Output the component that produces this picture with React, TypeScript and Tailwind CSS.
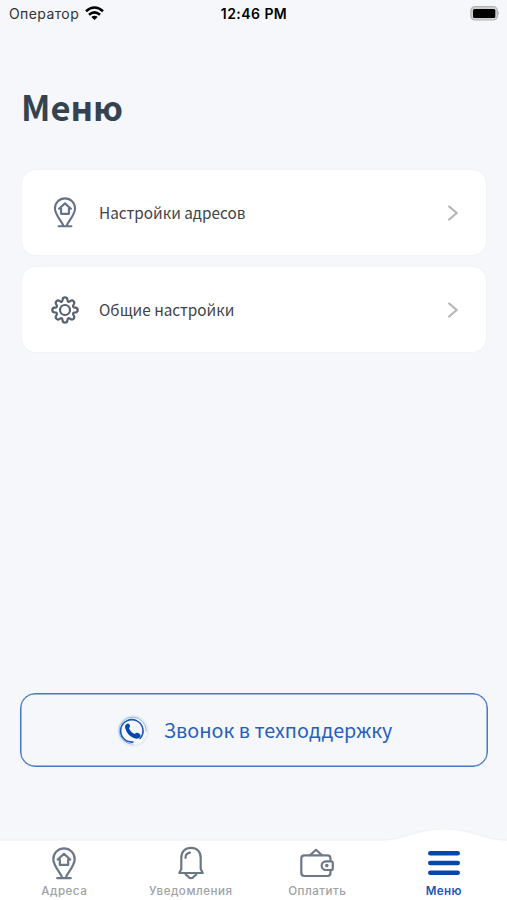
import React from "react";

const sourceFont = "font-['Noto_Sans_CJK_SC','Noto_Sans',sans-serif]";
const systemFont = "font-[Inter,'Liberation_Sans',sans-serif]";

type IconProps = { className?: string };

function AddressIcon({ className }: IconProps) {
  return (
    <svg className={className} viewBox="0 0 26 34" fill="none" stroke="currentColor" strokeWidth="2.3" strokeLinecap="round" strokeLinejoin="round">
      <path d="M11 31C8.500 25.500 2 19 2 12.500a11 11 0 0 1 22 0C24 19 17.500 25.500 15 31" />
      <path d="M6 32h14" />
      <path d="m6.500 13 6.500-6 6.500 6M8.700 12v6.500h8.600V12" />
    </svg>
  );
}

function GearIcon({ className }: IconProps) {
  return (
    <svg className={className} viewBox="0 0 28 28" fill="none" stroke="currentColor" strokeWidth="2.200" strokeLinejoin="round">
      <path d="M10.800 5.600Q11.500 5 11.600 3.600 11.800 1.300 14 1.300t2.400 2.300q.1 1.400.8 2t2-.4q2-1.500 3.400 0t0 3.400q-1 1.300-.4 2.200t2.200.8q2.300.2 2.300 2.400t-2.300 2.400q-1.600 0-2.200.8t.4 2.200q1.400 1.900 0 3.400t-3.400 0q-1.300-1-2-.4t-.8 2q-.2 2.300-2.400 2.300t-2.400-2.300q-.1-1.400-.8-2t-2 .4q-2 1.500-3.400 0t0-3.400q1-1.400.4-2.200t-2.200-.8Q1.300 16.200 1.300 14t2.300-2.400q1.600.1 2.200-.8t-.4-2.200q-1.400-1.900 0-3.400t3.400 0q1.300 1 2 .4Z" />
      <circle cx="14" cy="14" r="5" />
    </svg>
  );
}

function BellIcon({ className }: IconProps) {
  return (
    <svg className={className} viewBox="0 0 26 34" fill="none" stroke="currentColor" strokeWidth="2.200" strokeLinecap="round" strokeLinejoin="round">
      <path d="M3.300 23V12C3.300 5.500 7 1.800 13 1.800s9.700 3.700 9.700 10.200v11l2 4H1.300z" />
      <path d="M7.500 27.500c0 2 1.800 1.700 2.600 3 1.200 2.300 4.600 2.300 5.800 0 .8-1.300 2.600-1 2.600-3M7.500 12C7.500 8.800 9 7 12 6.600" />
    </svg>
  );
}

function WalletIcon({ className }: IconProps) {
  return (
    <svg className={className} viewBox="0 0 34 30" fill="none" stroke="currentColor" strokeWidth="2.200" strokeLinejoin="round" strokeLinecap="round">
      <path d="M30.500 13v-2.500Q30.500 7.300 27.500 7.300h-23q-3.200 0-3.200 3.200v14q0 3.500 3.200 3.500h23q3 0 3-3.500V22" />
      <path d="M10 7.300 16 1.800 22 7.300" />
      <path d="M26 13.300h5q1.800 0 1.800 1.800v5.100q0 1.800-1.800 1.800h-5a4.300 4.300 0 0 1 0-8.700Z" />
      <circle cx="26.800" cy="17.600" r=".7" fill="currentColor" />
    </svg>
  );
}

function SupportIcon() {
  return (
    <svg className="relative top-px left-px size-8 shrink-0" viewBox="0 0 32 32" fill="none" strokeLinecap="round">
      <circle cx="16" cy="16" r="15" stroke="#e2eaf5" strokeWidth="1.400" />
      <path d="M29.300 16A13.600 13.600 0 1 0 16 29.300" stroke="#96b2e0" strokeWidth="1" />
      <path d="M16 27A11.200 11.200 0 1 1 23 23.500" stroke="#1c58ba" strokeWidth="1.600" />
      <path d="M9.300 9.300c1.800-1.500 3-.6 3.500 1 .5 1.500.1 2.200-.8 2.900 1 2.600 2.900 4.600 5.800 5.700 1-1.200 1.900-1.500 3.400-.9 1.700.8 3 1.900 2.100 3.500-1.600 2.900-5.100 2.400-7.600 1.100-3.500-1.800-6.200-4.800-7.300-8.900-.5-1.700-.5-3.400.9-4.400Z" fill="#0747ac" />
    </svg>
  );
}

function StatusBar() {
  return (
    <header className={`flex h-[27px] items-center justify-between pr-[7px] pl-[9px] text-[14px] text-black ${systemFont}`}>
      <div className="flex flex-1 items-center gap-1.5">
        <span className="tracking-[0.4px] text-[#333]">Оператор</span>
        <svg className="-mt-0.5 h-[14px] w-[19px]" viewBox="0 0 19 14" fill="none" stroke="black" strokeWidth="2.600">
          <path d="M1 5.200q8.500-7.400 17 0M4 8.700q5.500-4.600 11 0" />
          <path d="M6.300 11q3.200-2.600 6.400 0L9.500 14z" fill="black" stroke="none" />
        </svg>
      </div>
      <span className="pr-px font-semibold tracking-[0.450px]">12:46 PM</span>
      <div className="flex flex-1 justify-end">
        <svg className="h-[15px] w-[30px]" viewBox="0 0 30 15">
          <rect x=".9" y=".7" width="26.500" height="13.300" rx="4" fill="#cfd0d2" stroke="#b2b4b6" strokeWidth="1.200" />
          <rect x="3" y="3" width="22.300" height="8.900" rx="1.500" fill="black" />
          <path d="M28.300 5q1.700 2.200 0 4.400z" fill="#999" />
        </svg>
      </div>
    </header>
  );
}

function MenuRow({ icon, label }: { icon: React.ReactNode; label: string }) {
  return (
    <button className="flex h-[85px] w-full items-center rounded-[14px] bg-white pr-[27px] shadow-[0_0_2px_rgba(40,50,70,0.07)]">
      <span className="flex w-[77px] justify-center pl-2">{icon}</span>
      <span className="flex-1 text-left text-[15.300px] text-[#40444a]">{label}</span>
      <svg className="h-[18px] w-3" viewBox="0 0 12 18" fill="none" stroke="#b5b7b9" strokeWidth="2.300" strokeLinecap="round" strokeLinejoin="round">
        <path d="m2.200 2.500 7.500 6.500-7.500 6.500" />
      </svg>
    </button>
  );
}

function Tab({ icon, label, active }: { icon: React.ReactNode; label: string; active?: boolean }) {
  return (
    <button className={`flex flex-1 flex-col items-center ${active ? "text-[#0747ac]" : "text-[#6c7888]"}`}>
      <span className="flex h-9 items-center">{icon}</span>
      <span className={`pt-px text-[11.600px] leading-[18px] ${active ? "font-semibold tracking-[0.4px] text-[#1b58b8]" : "font-medium tracking-[0.5px] text-[#a0a2a5]"}`}>{label}</span>
    </button>
  );
}

export default function App() {
  return (
    <div className={`flex h-[900px] w-[507px] flex-col overflow-hidden bg-[#f5f7fb] ${sourceFont}`}>
      <StatusBar />
      <main className="flex flex-1 flex-col pr-[21px] pl-[22px]">
        <h1 className="mt-[53px] -ml-px text-[34.500px] leading-[52px] font-bold text-[#34434f]">Меню</h1>
        <div className="mt-[38px] flex flex-col gap-3">
          <MenuRow icon={<AddressIcon className="h-[31px] w-6 text-[#65738a]" />} label="Настройки адресов" />
          <MenuRow icon={<GearIcon className="size-7 text-[#596273]" />} label="Общие настройки" />
        </div>
        <button className="-mx-0.5 mt-auto mb-[62px] flex h-[74px] items-center justify-center gap-4 rounded-[15px] border border-[#4677c6] text-[19.700px] text-[#2860b9] shadow-[inset_0_0_0_0.500px_#4677c6]">
          <SupportIcon />
          <span>Звонок в техподдержку</span>
        </button>
      </main>
      <nav className={`relative flex h-[71px] shrink-0 pt-4 ${systemFont}`}>
        <svg className="absolute inset-0 h-[71px] w-[507px]" viewBox="0 0 507 71">
          <path d="M-2 11H382C405 11 415 0 444 0s39 11 62 11h4v62H-2Z" fill="white" stroke="#eef0f3" strokeWidth="1" />
        </svg>
        <div className="relative flex flex-1 pl-px">
          <Tab icon={<AddressIcon className="h-[33px] w-[26px]" />} label="Адреса" />
          <Tab icon={<BellIcon className="h-[34px] w-[26px]" />} label="Уведомления" />
          <Tab icon={<WalletIcon className="h-[30px] w-[34px]" />} label="Оплатить" />
          <Tab
            active
            label="Меню"
            icon={
              <svg className="h-[26px] w-8" viewBox="0 0 32 26" stroke="currentColor" strokeWidth="4.600" strokeLinecap="round">
                <path d="M2.300 3.300h27.400M2.300 13h27.400M2.300 22.700h27.400" />
              </svg>
            }
          />
        </div>
      </nav>
    </div>
  );
}
